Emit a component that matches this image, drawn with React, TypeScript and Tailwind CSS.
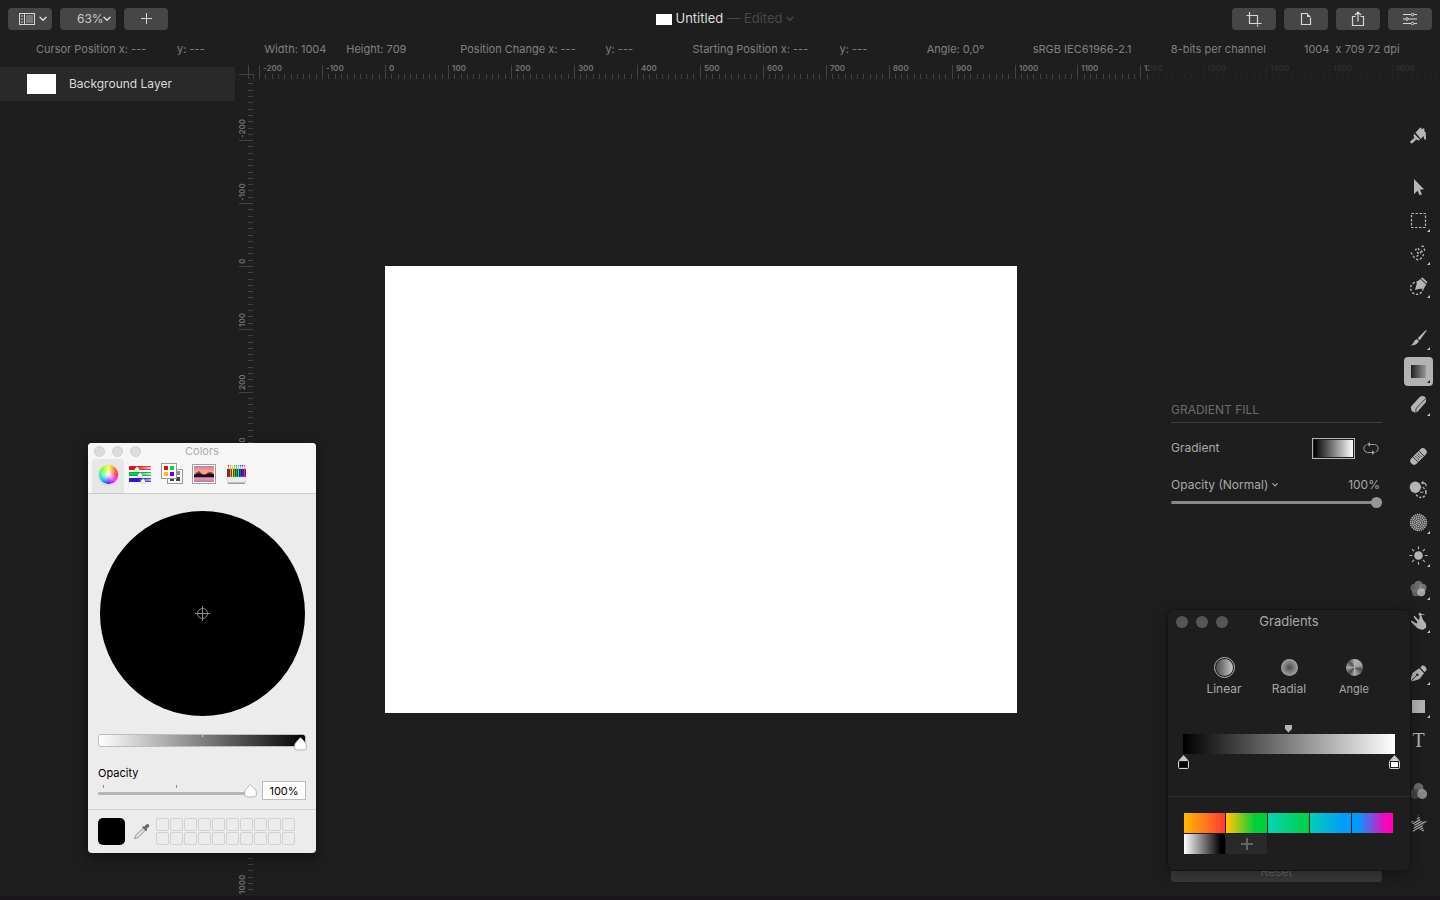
import React, { useState } from "react";
import clsx from "clsx";

const SCALE = 0.6295;

interface Tick {
  pos: number;
  label: string | null;
}

// origin is the ruler coordinate at which document pixel 0 sits
function buildTicks(origin: number, from: number, to: number): Tick[] {
  const ticks: Tick[] = [];
  for (let v = from; v <= to; v += 10) {
    ticks.push({
      pos: Math.round(origin + v * SCALE),
      label: v % 100 === 0 ? String(v) : null,
    });
  }
  return ticks;
}

function HorizontalRuler() {
  return (
    <svg
      className="h-[18px] w-full font-['Inter',sans-serif] text-[8px] font-semibold"
      aria-hidden="true"
    >
      <path d="M9.5 4v14M0 13.5h15" stroke="#424242" />
      {buildTicks(146, -210, 1670).map(({ pos, label }) => (
        <g key={pos}>
          <path d={`M${pos + 0.5} ${label ? 4 : 13}V18`} stroke="#424242" />
          {label && (
            <text x={pos + 4} y="10" fill="#747474">
              {label}
            </text>
          )}
        </g>
      ))}
    </svg>
  );
}

function VerticalRuler() {
  return (
    <svg
      className="-ml-1 h-auto w-[18px] shrink-0 self-stretch font-['Inter',sans-serif] text-[8px] font-semibold"
      aria-hidden="true"
    >
      {buildTicks(187, -290, 1000).map(({ pos, label }) => (
        <g key={pos}>
          <path d={`M${label ? 4 : 13} ${pos + 0.5}H18`} stroke="#424242" />
          {label && (
            <text
              transform={`translate(10 ${pos - 2}) rotate(-90)`}
              fill="#747474"
            >
              {label}
            </text>
          )}
        </g>
      ))}
    </svg>
  );
}

function Chevron({ className }: { className?: string }) {
  return (
    <svg
      viewBox="0 0 8 6"
      className={clsx("pointer-events-none h-[6px]", className)}
      fill="none"
      stroke="currentColor"
      strokeWidth="1.5"
      strokeLinecap="round"
      strokeLinejoin="round"
    >
      <path d="M1 1.2 4 4.3 7 1.2" />
    </svg>
  );
}

function ToolbarButton({
  label,
  children,
}: {
  label: string;
  children: React.ReactNode;
}) {
  return (
    <button
      type="button"
      aria-label={label}
      className="flex h-[22px] w-11 items-center justify-center gap-1 rounded bg-[#464646] text-[#d6d6d6]"
    >
      {children}
    </button>
  );
}

function Toolbar() {
  return (
    <header className="grid h-[38px] grid-cols-[1fr_auto_1fr] items-center px-2">
      <div className="flex gap-2">
        <ToolbarButton label="View layout">
          <svg className="ml-[6px]" width="16" height="12" viewBox="0 0 16 12" fill="none">
            <rect x="0.5" y="0.5" width="15" height="11" stroke="#d6d6d6" />
            <rect x="7" y="2" width="7" height="8" fill="#777777" />
            <path d="M5.5 0v12" stroke="#d6d6d6" />
            <path d="M2 3h2M2 6h2M2 9h2" stroke="#8d8d8d" strokeWidth="2" />
          </svg>
          <Chevron className="w-2" />
        </ToolbarButton>
        <div className="relative flex items-center">
          <select
            aria-label="Zoom"
            defaultValue="63%"
            className="h-[22px] w-14 appearance-none rounded bg-[#464646] pl-[17px] text-[12px] text-[#c9c9c9] outline-none"
          >
            <option>50%</option>
            <option>63%</option>
            <option>100%</option>
          </select>
          <Chevron className="absolute right-[5px] w-2 text-[#d6d6d6]" />
        </div>
        <ToolbarButton label="Add">
          <svg width="12" height="12" viewBox="0 0 12 12" stroke="currentColor">
            <path d="M6.5 0v11M1 5.5h11" />
          </svg>
        </ToolbarButton>
      </div>

      <div className="flex items-center pl-[10px] text-[13px]">
        <span className="mr-1 h-[11px] w-4 bg-white" />
        <h1 className="text-[#dcdcdc]">Untitled</h1>
        <span className="ml-1 text-[#484848]">— Edited</span>
        <Chevron className="ml-1 w-2 text-[#484848]" />
      </div>

      <div className="flex justify-end gap-2">
        <ToolbarButton label="Crop">
          <svg width="16" height="16" viewBox="0 0 16 16" fill="none" stroke="currentColor">
            <path d="M0.5 4.5h11v7.500M3.5 1v11.500h12M11.5 13.500v2" strokeWidth="1.2" />
          </svg>
        </ToolbarButton>
        <ToolbarButton label="New document">
          <svg width="12" height="14" viewBox="0 0 12 14" fill="none" stroke="currentColor">
            <path d="M7.5 1.5h-6v11h9v-7" strokeWidth="1.2" />
            <path d="M7 1v4h4z" fill="currentColor" stroke="none" />
          </svg>
        </ToolbarButton>
        <ToolbarButton label="Share">
          <svg width="14" height="16" viewBox="0 0 14 16" fill="none" stroke="currentColor">
            <path d="M4.5 5.5h-3v9h11v-9h-3M7 10.5v-9M4 4l3-3 3 3" strokeWidth="1.2" />
          </svg>
        </ToolbarButton>
        <ToolbarButton label="Adjustments">
          <svg width="16" height="12" viewBox="0 0 16 12" fill="none" stroke="currentColor">
            <path d="M1 1.5h8M12 1.5h3M1 6h2.5M6.5 6H15M1 10.5h8M12 10.5h3" strokeWidth="1.2" />
            <circle cx="10.5" cy="1.5" r="1.3" />
            <circle cx="5" cy="6" r="1.3" />
            <circle cx="10.5" cy="10.5" r="1.3" />
          </svg>
        </ToolbarButton>
      </div>
    </header>
  );
}

function InfoBar() {
  return (
    <div className="grid h-[22px] grid-cols-[141fr_87fr_82fr_114fr_145fr_87fr_147fr_87fr_106fr_138fr_133fr_100fr] items-center px-9 text-[11px] whitespace-nowrap text-[#808080]">
      <span className="min-w-0">Cursor Position x: ---</span>
      <span className="min-w-0">y: ---</span>
      <span className="min-w-0">Width: 1004</span>
      <span className="min-w-0">Height: 709</span>
      <span className="min-w-0">Position Change x: ---</span>
      <span className="min-w-0">y: ---</span>
      <span className="min-w-0">Starting Position x: ---</span>
      <span className="min-w-0">y: ---</span>
      <span className="min-w-0">Angle: 0,0°</span>
      <span className="min-w-0">sRGB IEC61966-2.1</span>
      <span className="min-w-0">8-bits per channel</span>
      <span className="min-w-0 whitespace-pre">1004  x 709 72 dpi</span>
    </div>
  );
}

function ToolIcon({ children }: { children: React.ReactNode }) {
  return (
    <svg
      width="19"
      height="19"
      viewBox="0 0 19 19"
      fill="#b5b5b5"
      stroke="none"
      strokeLinecap="round"
      strokeLinejoin="round"
    >
      {children}
    </svg>
  );
}

const sharpenDots = [0, 1, 2, 3, 4].flatMap((ring) => {
  const count = ring === 0 ? 1 : ring * 6;
  return Array.from({ length: count }, (_, i) => {
    const a = (i / count) * Math.PI * 2 + ring * 0.3;
    return [9.5 + Math.cos(a) * ring * 2, 9.5 + Math.sin(a) * ring * 2];
  });
});

interface Tool {
  name: string;
  more?: boolean;
  icon: React.ReactNode;
}

const toolGroups: Tool[][] = [
  [
    {
      name: "Style",
      icon: (
        <>
          <path d="M6.5 6.5 10.8 2q1.2-1 1.7.2l.2 1.3 1.6-1.3q1.2-.3 1.2.9l-.3 1.8q1.300.3 1.500 1.900l.3 6.200q-.7 1.600-1.700.2L14.500 10l-2.700 3z" />
          <path d="m5.200 7.800 5.800 6-1.500.8-2.300-1L4 16.800q-1.600 1.300-2.600 0-.8-1.400.8-2.300L5.400 12l-1-2.200z" />
        </>
      ),
    },
  ],
  [
    { name: "Arrange", icon: <path d="M5 1v15l3.500-3.200 2.100 4.500 2.400-1-2.100-4.500 4.100-.5z" /> },
    {
      name: "Rectangular selection",
      more: true,
      icon: (
        <rect
          x="2.5"
          y="2.5"
          width="14"
          height="14"
          fill="none"
          stroke="#b5b5b5"
          strokeWidth="1.2"
          strokeDasharray="2.5 1.5"
          strokeLinecap="butt"
        />
      ),
    },
    {
      name: "Free selection",
      more: true,
      icon: (
        <path
          d="M2 8.500 5.500 14q3.500 3.500 7 0 3-3 1-5.500L11 5M7.500 12.500 10 10.500 6.500 5.500 9 4l3 5.500M12.500 2l2 .5 1.500 5"
          fill="none"
          stroke="#b5b5b5"
          strokeWidth="1.3"
          strokeDasharray="2.4 1.7"
          strokeLinecap="butt"
        />
      ),
    },
    {
      name: "Quick selection",
      more: true,
      icon: (
        <>
          <circle
            cx="7.8"
            cy="11.2"
            r="6.2"
            fill="none"
            stroke="#b5b5b5"
            strokeWidth="1.3"
            strokeDasharray="2.4 1.6"
            strokeLinecap="butt"
          />
          <path d="M6 13 8.300 4.500l3-2.500 6 5.500-2.500 4-5.300.5z" />
          <path d="m11.800 1.500 1.700-1 4.700 4.300-.5 2z" />
        </>
      ),
    },
  ],
  [
    {
      name: "Paint",
      more: true,
      icon: (
        <>
          <path d="M8.6 9.3 16.7 1.200q1.500-.5.8.8l-6.800 9.200z" />
          <path d="m7.800 10 2.200 2-.9 1.200q-2.100 3.200-7.800 3.300 2-.7 3.200-3 1.200-2.900 3.300-3.500z" />
        </>
      ),
    },
    { name: "Gradient", more: true, icon: null },
    {
      name: "Erase",
      more: true,
      icon: (
        <>
          <path d="M2 11.500 10.500 2.200q2.800-2.400 5.800-.2 1.300 2.300.5 5.200L8.500 16.800q-2.700 1.500-5.500-.5-1.500-2.200-1-4.800z" />
          <path d="M7 17q-.6-2.300.4-3.800l9.300-9.700" fill="none" stroke="#1e1e1e" strokeWidth="0.8" />
        </>
      ),
    },
  ],
  [
    {
      name: "Repair",
      icon: (
        <g transform="rotate(-45 9.5 9.5)">
          <rect x="-0.5" y="5.700" width="20" height="7.600" rx="3.800" />
          <path d="M5.300 5.500v8M13.700 5.500v8" stroke="#1e1e1e" strokeWidth="0.800" />
          <path
            d="M7.500 7.700v.1M9.500 7.700v.1M11.500 7.700v.1M7.500 9.500v.1M9.500 9.500v.1M11.500 9.500v.1M7.500 11.300v.1M9.500 11.300v.1M11.500 11.300v.1"
            stroke="#1e1e1e"
            strokeWidth="1"
          />
        </g>
      ),
    },
    {
      name: "Clone",
      icon: (
        <>
          <circle
            cx="11.8"
            cy="12.2"
            r="5.2"
            fill="none"
            stroke="#b5b5b5"
            strokeWidth="1.5"
            strokeDasharray="2.2 1.5"
            strokeLinecap="butt"
          />
          <path d="M13.5 2.8q3.500-.2 3.600 3" fill="none" stroke="#b5b5b5" strokeWidth="1.2" />
          <path d="M11.800 2.800 14.300.8v4z" />
          <circle cx="6.3" cy="7.2" r="5.6" />
          <path d="M11.500 12.200h2.500" stroke="#b5b5b5" />
        </>
      ),
    },
    {
      name: "Sharpen",
      more: true,
      icon: (
        <>
          <circle cx="9.5" cy="9.5" r="8" fill="#4a4a4a" />
          {sharpenDots.map(([x, y], i) => (
            <circle key={i} cx={x} cy={y} r="0.8" />
          ))}
        </>
      ),
    },
    {
      name: "Lighten",
      more: true,
      icon: (
        <>
          <circle cx="9.5" cy="9.5" r="4.3" />
          <path
            d="M9.500.8v2M9.500 16.200v2M.8 9.500h2M16.200 9.500h2M3.400 3.400l1.400 1.400M14.200 14.200l1.400 1.400M3.400 15.600l1.400-1.400M14.200 4.800l1.400-1.400"
            stroke="#b5b5b5"
            strokeWidth="1.1"
          />
        </>
      ),
    },
    {
      name: "Color adjustments",
      more: true,
      icon: (
        <>
          <circle cx="9.5" cy="5.7" r="4" fill="#6a6a6a" />
          <circle cx="5.5" cy="8.8" r="4" fill="#6a6a6a" fillOpacity="0.85" />
          <circle cx="13.500" cy="8.800" r="4" fill="#858585" fillOpacity="0.8" />
          <circle cx="7" cy="13.200" r="4" fill="#6f6f6f" fillOpacity="0.8" />
          <circle cx="12.200" cy="13.200" r="4" fill="#bababa" fillOpacity="0.85" />
        </>
      ),
    },
    {
      name: "Warp",
      more: true,
      icon: (
        <>
          <path d="M1.500 9.500q.3-1.300 1.500-.8l4.500 2.800q1.500-.5.500-2L4.700 5.300q-.2-1.600 1.200-1.200L9.500 8q1.800-1.500 1-4.500.9-1.300 2 0 .8 2.500 1.500 4.300l2.700 3.400q1 2 .3 4.600l-3 1.900q-3.500-.2-5.800-1.700z" />
          <path d="m9 2.200 2.800-2v1.500q3-.2 4.500 1.800-2-1-4.500-.6v1.400z" />
        </>
      ),
    },
  ],
  [
    {
      name: "Pen",
      more: true,
      icon: (
        <>
          <path d="M1.500 17.500q.6-5 2.200-8.700l6.500-4.500 4.800 5-4.500 5.800q-4 1.800-9 2.400z" />
          <path d="m11.200 3.600 2.400-2.400q3.400.8 4.100 4.500l-2 2.600z" />
          <path d="m2 17 5.500-5.500" stroke="#1e1e1e" strokeWidth="0.8" />
          <circle cx="8.3" cy="10.700" r="1.200" fill="#1e1e1e" />
        </>
      ),
    },
    { name: "Rectangle", more: true, icon: <path d="M3 3h13v13H3z" /> },
    { name: "Type", icon: null },
  ],
  [
    {
      name: "Color fill",
      icon: (
        <>
          <circle cx="9.5" cy="6" r="4.900" fill="#6a6a6a" />
          <circle cx="5.800" cy="12" r="4.900" fill="#4b4b4b" fillOpacity="0.85" />
          <circle cx="13.200" cy="12" r="4.900" fill="#9c9c9c" fillOpacity="0.85" />
        </>
      ),
    },
    {
      name: "Effects",
      icon: (
        <>
          <clipPath id="star">
            <path d="m9.500 0 2.300 6.300h6.900l-5.300 4.300 2 6.900-5.900-4.100-5.900 4.100 2-6.900L.3 6.300h6.900z" />
          </clipPath>
          <path
            clipPath="url(#star)"
            d="M0 6 19-5M0 8.500l19-11M0 11 19 0M0 13.500l19-11M0 16 19 5M0 18.500l19-11M0 21l19-11M0 23.500l19-11M0 26l19-11"
            fill="none"
            stroke="#b0b0b0"
            strokeWidth="1.3"
          />
        </>
      ),
    },
  ],
];

function Tools() {
  const [active, setActive] = useState("Gradient");

  return (
    <nav aria-label="Tools" className="flex w-[43px] shrink-0 flex-col gap-[23px] px-[7px] pt-[42px]">
      {toolGroups.map((group) => (
        <div key={group[0].name} className="flex flex-col gap-1">
          {group.map((tool) => (
            <button
              key={tool.name}
              type="button"
              aria-label={tool.name}
              onClick={() => setActive(tool.name)}
              className={clsx(
                "relative flex h-[29px] w-[29px] items-center justify-center rounded",
                active === tool.name && "bg-[#b3b3b3]"
              )}
            >
              {tool.name === "Gradient" && (
                <span className="h-[13px] w-[15px] bg-linear-to-r/srgb from-[#202020] to-[#999999]" />
              )}
              {tool.name === "Type" && (
                <span className="font-['Liberation_Serif',serif] text-[20px] leading-none text-[#b5b5b5]">
                  T
                </span>
              )}
              {tool.icon && <ToolIcon>{tool.icon}</ToolIcon>}
              {tool.more && (
                <svg
                  className="absolute right-[3px] bottom-[3px]"
                  width="3"
                  height="3"
                  viewBox="0 0 3 3"
                >
                  <path
                    d="M3 0v3H0z"
                    fill={active === tool.name ? "#1e1e1e" : "#c4c4c4"}
                  />
                </svg>
              )}
            </button>
          ))}
        </div>
      ))}
    </nav>
  );
}

function Inspector() {
  const [opacity, setOpacity] = useState(100);

  return (
    <section className="flex w-[211px] shrink-0 flex-col pt-[322px] pb-[18px] text-[12px] text-[#a9a9a9]">
      <h2 className="border-b border-[#3f3f3f] pb-[3px] leading-[18px] text-[#6b6b6b]">
        GRADIENT FILL
      </h2>
      <div className="mt-[14px] flex h-[22px] items-center">
        <span className="flex-1">Gradient</span>
        <button
          type="button"
          aria-label="Edit gradient"
          className="h-[21px] w-[43px] border border-[#b4b4b4] p-px"
        >
          <span className="block h-full bg-linear-to-r/srgb from-black to-white" />
        </button>
        <button type="button" aria-label="Reverse gradient" className="mr-[3px] ml-2">
          <svg width="16" height="13" viewBox="0 0 16 13" fill="none" stroke="#9b9b9b">
            <path d="M6 2.5h5.500a4 4 0 0 1 1.500 7.600M10 10.500H4.500A4 4 0 0 1 3 2.900" strokeLinecap="round" />
            <path d="M7 0 4 2.300 7 4.800zM9 8.200l3 2.300-3 2.500z" fill="#9b9b9b" stroke="none" />
          </svg>
        </button>
      </div>
      <div className="mt-4 flex h-5 items-center">
        <select
          aria-label="Blend mode"
          className="field-sizing-content appearance-none bg-transparent outline-none"
        >
          <option>Opacity (Normal)</option>
          <option>Opacity (Multiply)</option>
        </select>
        <Chevron className="ml-1 w-[6px]" />
        <output htmlFor="fill-opacity" className="mr-[2px] ml-auto">
          {opacity}%
        </output>
      </div>
      <input
        id="fill-opacity"
        type="range"
        aria-label="Opacity"
        value={opacity}
        onChange={(e) => setOpacity(Number(e.target.value))}
        className="mt-[2px] h-[11px] w-full appearance-none bg-transparent outline-none [&::-webkit-slider-runnable-track]:h-[3px] [&::-webkit-slider-runnable-track]:rounded-full [&::-webkit-slider-runnable-track]:bg-[#8a8a8a] [&::-webkit-slider-thumb]:-mt-1 [&::-webkit-slider-thumb]:size-[11px] [&::-webkit-slider-thumb]:appearance-none [&::-webkit-slider-thumb]:rounded-full [&::-webkit-slider-thumb]:bg-[#969696]"
      />
      <button
        type="button"
        className="mt-auto h-5 rounded bg-[#3b3b3b] text-center leading-5 text-[#686868]"
      >
        Reset
      </button>
    </section>
  );
}

function Thumb() {
  return (
    <svg width="13" height="14" viewBox="0 0 13 14">
      <path
        d="M6.5.8q.5 0 1 .6l4 4.500q.8.9.8 2v3q0 2-2 2H2.700q-2 0-2-2v-3q0-1.100.8-2l4-4.500q.5-.6 1-.6z"
        fill="#ffffff"
        stroke="#a5a5a5"
        strokeWidth="0.8"
      />
    </svg>
  );
}

function PointerSlider({
  label,
  value,
  onChange,
  children,
}: {
  label: string;
  value: number;
  onChange: (value: number) => void;
  children: React.ReactNode;
}) {
  return (
    <div className="relative">
      {children}
      <div className="pointer-events-none absolute inset-x-0 top-[3px] mr-3">
        <div className="w-min" style={{ marginLeft: `${value}%` }}>
          <Thumb />
        </div>
      </div>
      <input
        type="range"
        aria-label={label}
        value={value}
        onChange={(e) => onChange(Number(e.target.value))}
        className="absolute inset-0 w-full opacity-0"
      />
    </div>
  );
}

const pencils = [
  "#f5002a",
  "#ff9a00",
  "#e8f000",
  "#3bd23f",
  "#00b070",
  "#16d9e8",
  "#1a49f0",
  "#6a12e0",
  "#f00fd0",
];

const pickerTabs = [
  {
    name: "Color wheel",
    icon: (
      <span className="size-[19px] rounded-full bg-[radial-gradient(circle,white,transparent_75%),conic-gradient(from_90deg,#ff0030,#ff00ff,#3000ff,#00a0ff,#00ff80,#60ff00,#ffff00,#ff6000,#ff0030)] shadow-sm" />
    ),
  },
  {
    name: "Color sliders",
    icon: (
      <svg width="22" height="19" viewBox="0 0 22 19">
        <defs>
          <linearGradient id="sr">
            <stop offset="0.3" stopColor="#f00808" />
            <stop offset="1" stopColor="#ffc8c8" />
          </linearGradient>
          <linearGradient id="sg">
            <stop offset="0.4" stopColor="#00d348" />
            <stop offset="1" stopColor="#b8f5cc" />
          </linearGradient>
          <linearGradient id="sb">
            <stop offset="0.4" stopColor="#3a10f0" />
            <stop offset="1" stopColor="#bcb0ff" />
          </linearGradient>
        </defs>
        <rect y="1" width="22" height="4" fill="url(#sr)" />
        <rect y="7" width="22" height="4" fill="url(#sg)" />
        <rect y="13" width="22" height="4" fill="url(#sb)" />
        <path d="M0 1.500h22M0 4.500h22" stroke="#c03030" strokeOpacity="0.7" />
        <path d="M0 7.500h22M0 10.500h22" stroke="#109040" strokeOpacity="0.7" />
        <path d="M0 13.500h22M0 16.500h22" stroke="#3020a0" strokeOpacity="0.7" />
        <path
          d="m8 1.500 2.300 2.500v2h-4.600v-2zM11 7.500l2.300 2.500v2h-4.600v-2zM14 13.500l2.300 2.500v2h-4.600v-2z"
          fill="#ffffff"
          stroke="#9a9a9a"
          strokeWidth="0.4"
        />
      </svg>
    ),
  },
  {
    name: "Color palettes",
    icon: (
      <svg width="22" height="22" viewBox="0 0 22 22">
        <rect x="6.5" y="6.5" width="15" height="14" fill="#f8f8f8" stroke="#9a9a9a" />
        <path d="M15 8h4v4h-4z" fill="#909090" />
        <path d="M15 14h4v4h-4zM9 14h4v4H9z" fill="#444444" />
        <rect x="0.5" y="0.5" width="15" height="15" fill="#ffffff" stroke="#9a9a9a" />
        <path d="M3 3h4v4H3z" fill="#ff0000" />
        <path d="M9 3h4v4H9z" fill="#00d348" />
        <path d="M3 9h4v4H3z" fill="#ffbf00" />
        <path d="M9 9h4v4H9z" fill="#5a00ff" />
      </svg>
    ),
  },
  {
    name: "Image palettes",
    icon: (
      <svg width="24" height="20" viewBox="0 0 24 20">
        <defs>
          <linearGradient id="sky" x2="0" y2="1">
            <stop offset="0" stopColor="#b880b8" />
            <stop offset="0.5" stopColor="#ff9c80" />
            <stop offset="1" stopColor="#ffb060" />
          </linearGradient>
          <linearGradient id="sea" x2="0" y2="1">
            <stop offset="0" stopColor="#f8b0b8" />
            <stop offset="1" stopColor="#c07aa8" />
          </linearGradient>
        </defs>
        <rect x="0.5" y="0.5" width="23" height="19" fill="#ffffff" stroke="#a0a0a0" />
        <path d="M2 2h20v9H2z" fill="url(#sky)" />
        <path d="M2 12h20v6H2z" fill="url(#sea)" />
        <path d="M2 10.500 4 9l3-2 3 3 3 .5 3-2 3-.5 3 2v3.500H2z" fill="#6a3a68" />
        <path d="M2 11l5-1.500 5 1.500 5-1.500 5 1v2.500H2z" fill="#1c1022" />
      </svg>
    ),
  },
  {
    name: "Pencils",
    icon: (
      <svg width="19" height="20" viewBox="0 0 19 20">
        {pencils.map((color, i) => (
          <g key={color}>
            <path d={`M${i * 2 + 0.5} 5.5l1-4 1 4z`} fill="#d8b890" />
            <path d={`M${i * 2 + 0.5} 5h2v8h-2z`} fill={color} />
            <path d={`M${i * 2 + 0.5} 5v8`} stroke="#101010" strokeWidth="0.7" />
            <circle cx={i * 2 + 1.5} cy="1.8" r="0.8" fill={color} />
          </g>
        ))}
        <path d="M18.500 5v8" stroke="#101010" strokeWidth="0.7" />
        <path d="M0 13h19v4.500q0 1.500-1.500 1.500h-16Q0 19 0 17.500z" fill="#ededed" stroke="#b0b0b0" strokeWidth="0.5" />
        <path d="M1 19.200h17" stroke="#7d7d7d" />
      </svg>
    ),
  },
];

function ColorsWindow() {
  const [tab, setTab] = useState("Color wheel");
  const [darkness, setDarkness] = useState(100);
  const [opacity, setOpacity] = useState(100);

  return (
    <section
      aria-label="Colors"
      className="absolute top-[443px] left-[88px] w-[228px] overflow-hidden rounded bg-[#ececec] text-[11px] text-black shadow-[0_4px_14px_rgba(0,0,0,0.5)]"
    >
      <div className="border-b border-[#cccccc] bg-[#f6f6f6]">
        <div className="grid h-4 grid-cols-3 items-center px-[6px]">
          <div className="flex gap-[7px]">
            {["Close", "Minimize", "Zoom"].map((name) => (
              <button
                key={name}
                type="button"
                aria-label={name}
                className="size-[11px] rounded-full border border-[#cfcfcf] bg-[#dcdcdc]"
              />
            ))}
          </div>
          <h2 className="text-center leading-4 text-[#acacac]">Colors</h2>
        </div>
        <div className="flex h-[34px] px-1">
          {pickerTabs.map(({ name, icon }) => (
            <button
              key={name}
              type="button"
              aria-label={name}
              onClick={() => setTab(name)}
              className={clsx(
                "flex w-8 items-center justify-center rounded-t pb-1",
                tab === name && "bg-[#e7e7e7]"
              )}
            >
              {icon}
            </button>
          ))}
        </div>
      </div>

      <div className="px-[10px] pt-[17px]">
        <div className="mx-auto flex size-[205px] items-center justify-center rounded-full bg-black">
          <svg width="15" height="15" viewBox="0 0 15 15" fill="none" stroke="#8c8c8c">
            <circle cx="7.5" cy="7.5" r="5" />
            <path d="M7.5 0v15M0 7.5h15" />
          </svg>
        </div>

        <div className="mt-[18px]">
          <PointerSlider label="Brightness" value={darkness} onChange={setDarkness}>
            <div className="flex h-[13px] justify-center rounded-[3px] border border-[#bdbdbd] bg-linear-to-r/srgb from-white to-black">
              <span className="h-[2px] w-px bg-[#d0d0d0]" />
            </div>
          </PointerSlider>
        </div>

        <label htmlFor="color-opacity" className="mt-[18px] block leading-4">
          Opacity
        </label>
        <div className="flex h-5 items-start gap-[6px]">
          <div className="w-[158px]">
            <PointerSlider label="Opacity slider" value={opacity} onChange={setOpacity}>
              <div className="flex h-[11px] gap-[72px] pt-[4px] pl-[5px]">
                <span className="h-[3px] w-px bg-[#8e8e8e]" />
                <span className="h-[3px] w-px bg-[#8e8e8e]" />
              </div>
              <div className="mr-[6px] h-[3px] rounded-full bg-[#b5b5b5]" />
            </PointerSlider>
          </div>
          <input
            id="color-opacity"
            type="text"
            value={`${opacity}%`}
            onChange={(e) => setOpacity(Math.min(100, parseInt(e.target.value) || 0))}
            className="h-[19px] w-11 border border-[#bdbdbd] bg-white text-center outline-none"
          />
        </div>
      </div>

      <div className="mt-2 flex items-center border-t border-[#d2d2d2] px-[10px] py-2">
        <span className="size-[27px] rounded-[5px] bg-black" />
        <button type="button" aria-label="Pick color from screen" className="mr-[6px] ml-2">
          <svg width="17" height="17" viewBox="0 0 17 17">
            <path
              d="m10 5.500 2 2-6.500 6.700-3 1.300-1 .3.3-1 1.300-3z"
              fill="#e2e2e2"
              stroke="#8a8a8a"
              strokeWidth="0.9"
            />
            <path d="m9 4 1.200-1 .9.8 2-2.300q1.600-1.200 2.800 0 1 1.200-.2 2.600l-2.200 2 .8 1-1.200 1.200z" fill="#6a6a6a" />
          </svg>
        </button>
        <div className="grid grid-cols-10 gap-px">
          {Array.from({ length: 20 }, (_, i) => (
            <span key={i} className="size-[13px] rounded-[2px] border border-[#d2d2d2]" />
          ))}
        </div>
      </div>
    </section>
  );
}

function GradientStop({ color }: { color: string }) {
  return (
    <svg width="11" height="14" viewBox="0 0 11 14">
      <path d="M5.5 0 10 5H1z" fill="#c4c4c4" />
      <rect x="0.5" y="5.5" width="10" height="8" rx="1" fill="#1e1e1e" stroke="#d4d4d4" />
      <rect x="2" y="7" width="7" height="5" fill={color} />
    </svg>
  );
}

function GradientsWindow() {
  const [type, setType] = useState("Linear");

  const types = [
    {
      name: "Linear",
      size: "text-[12px]",
      swatch: "bg-linear-to-r/srgb from-[#4a4a4a] to-[#c9c9c9]",
    },
    {
      name: "Radial",
      size: "text-[12px]",
      swatch: "bg-[radial-gradient(circle,#4c4c4c,#a2a2a2_70%)]",
    },
    {
      name: "Angle",
      size: "text-[11px]",
      swatch:
        "bg-[conic-gradient(#b0b0b0,#a0a0a0_20%,#4e4e4e_30%,#8a8a8a_42%,#b0b0b0_50%,#484848_62%,#a8a8a8_75%,#505050_88%,#b0b0b0)]",
    },
  ];

  const presets = [
    "bg-linear-to-r/srgb from-[#ffb900] to-[#ff3b36]",
    "bg-linear-to-r/srgb from-[#ffc400] from-5% to-[#00cf3c] to-70%",
    "bg-linear-to-r/srgb from-[#06d3b4] to-[#00d143]",
    "bg-linear-to-r/srgb from-[#04cfb4] to-[#009bff] to-85%",
    "bg-linear-to-r/srgb from-[#009bff] from-15% to-[#ff00b8] to-85%",
    "bg-linear-to-r/srgb from-white to-black to-90%",
  ];

  return (
    <section
      aria-label="Gradients"
      className="absolute right-[30px] bottom-[30px] w-[242px] rounded-md bg-[#1e1e1e] text-[12px] text-[#a9a9a9] shadow-[0_0_0_1px_#141414,0_4px_16px_rgba(0,0,0,0.4)]"
    >
      <div className="grid h-6 grid-cols-3 items-center px-2">
        <div className="flex gap-2">
          {["Close", "Minimize", "Zoom"].map((name) => (
            <button
              key={name}
              type="button"
              aria-label={name}
              className="size-3 rounded-full bg-[#565656]"
            />
          ))}
        </div>
        <h2 className="text-center text-[13px]">Gradients</h2>
      </div>

      <div className="flex justify-center pt-[23px]">
        {types.map(({ name, size, swatch }) => (
          <button
            key={name}
            type="button"
            onClick={() => setType(name)}
            className={clsx(
              "flex w-[65px] flex-col items-center gap-[2px] leading-[18px]",
              size
            )}
          >
            <span
              className={clsx(
                "flex size-[21px] items-center justify-center rounded-full border",
                type === name ? "border-[#b5b5b5]" : "border-transparent"
              )}
            >
              <span className={clsx("size-[17px] rounded-full", swatch)} />
            </span>
            {name}
          </button>
        ))}
      </div>

      <div className="px-[15px] pt-[27px] pb-[42px]">
        <svg className="mx-auto" width="8" height="8" viewBox="0 0 8 8">
          <path d="M0 0h7v4L3.5 7.500 0 4z" fill="#b5b5b5" />
        </svg>
        <div className="relative mt-px h-5 bg-linear-to-r/srgb from-black to-white">
          <button type="button" aria-label="Start color" className="absolute top-[21px] -left-[5px]">
            <GradientStop color="#000000" />
          </button>
          <button type="button" aria-label="End color" className="absolute top-[21px] -right-[5px]">
            <GradientStop color="#ffffff" />
          </button>
        </div>
      </div>

      <div className="grid grid-cols-5 gap-px border-t border-[#303030] py-4 pr-[17px] pl-4">
        {presets.map((preset, i) => (
          <button
            key={preset}
            type="button"
            aria-label={`Preset ${i + 1}`}
            className={clsx("h-5", preset)}
          />
        ))}
        <button
          type="button"
          aria-label="Add preset"
          className="flex h-5 items-center justify-center bg-[#292929]"
        >
          <svg width="12" height="12" viewBox="0 0 12 12" stroke="#636363" strokeWidth="2">
            <path d="M6 0v12M0 6h12" />
          </svg>
        </button>
      </div>
    </section>
  );
}

export default function App() {
  return (
    <div className="relative flex min-h-screen flex-col bg-[#1e1e1e] font-['Inter',sans-serif]">
      <Toolbar />
      <InfoBar />
      <div className="flex flex-1">
        <aside aria-label="Layers" className="w-[235px] shrink-0 pt-[7px]">
          <div className="flex h-[34px] items-center gap-[13px] bg-[#292929] pl-[27px] text-[12px] text-[#dadada]">
            <span className="h-5 w-[29px] bg-white" />
            Background Layer
          </div>
        </aside>

        <div className="flex min-w-0 flex-1 flex-col pt-px pl-1">
          <div className="relative">
            <HorizontalRuler />
            <div className="absolute inset-y-0 right-0 w-[291px] bg-[#1e1e1e]/80" />
          </div>
          <div className="flex flex-1">
            <VerticalRuler />
            <main className="flex flex-1 items-center justify-center">
              <div className="h-[447px] w-[632px] bg-white" />
            </main>
            <div className="flex w-[291px] shrink-0 justify-between pl-[22px]">
              <Inspector />
              <Tools />
            </div>
          </div>
        </div>
      </div>
      <div className="absolute inset-x-0 bottom-0 h-1 bg-[#1a1519]" />

      <ColorsWindow />
      <GradientsWindow />
    </div>
  );
}
